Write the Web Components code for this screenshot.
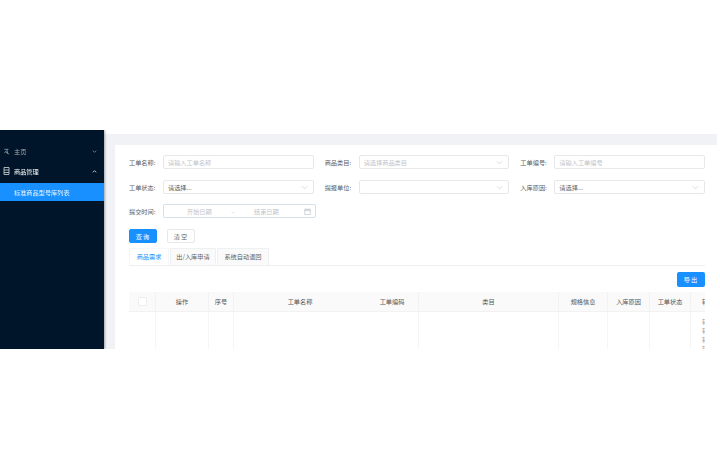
<!DOCTYPE html>
<html lang="zh">
<head>
<meta charset="utf-8">
<title>标准商品型号库列表</title>
<style>
  html, body { margin: 0; background: #fff; }
  body { font-family: "Noto Sans CJK SC", "Liberation Sans", sans-serif; font-size: 6.2px; color: #606266; }
</style>
</head>
<body>
<app-shell>
  <side-menu slot="side"></side-menu>
  <search-form></search-form>
  <order-tabs></order-tabs>
  <order-table></order-table>
</app-shell>

<script>
(function () {
  const CHEVRON = '<svg width="7" height="7" viewBox="0 0 8 8" fill="none" stroke="#c0c4cc" stroke-width=".7"><path d="M1 2.5 4 5.5 7 2.5"/></svg>';
  const CALENDAR = '<svg width="7" height="7" viewBox="0 0 8 8" fill="none" stroke="#b4b8c0" stroke-width=".7"><path d="M.8 1.5h6.4v6H.8zM.8 3h6.4M2.4 .5v1.5M5.6 .5v1.5"/></svg>';

  class AppShell extends HTMLElement {
    constructor() {
      super();
      this.attachShadow({ mode: 'open' }).innerHTML = `
        <style>
          :host { display: flex; width: 717px; height: 219px; margin-top: 130px; overflow: hidden; filter: blur(.35px); }
          main { flex: 1; min-width: 0; padding-top: 4px; box-sizing: border-box; }
          .band { height: 215px; background: #f0f2f5; padding: 11px 0 0 11px; box-sizing: border-box; }
          .card { height: 100%; background: #fff; padding: 10px 12px 0 14px; box-sizing: border-box; }
        </style>
        <slot name="side"></slot>
        <main><div class="band"><div class="card"><slot></slot></div></div></main>
      `;
    }
  }

  class SideMenu extends HTMLElement {
    constructor() {
      super();
      this.attachShadow({ mode: 'open' }).innerHTML = `
        <style>
          :host { display: block; width: 104px; flex: none; background: #001529; padding-top: 11px; box-sizing: border-box; box-shadow: 1px 0 2px rgba(0,21,41,.35); position: relative; color: #a6adb4; }
          .row { display: flex; align-items: center; height: 20px; padding: 0 7px 0 3px; }
          .row span { flex: 1; margin-left: 4px; }
          .row.open { color: #fff; }
          .row svg { flex: none; }
          .sub { height: 18px; line-height: 19px; margin-top: 2px; padding-left: 14px; background: #1890ff; color: #e8f4ff; white-space: nowrap; }
        </style>
        <div class="row">
          <svg width="7" height="7" viewBox="0 0 8 8" fill="none" stroke="#a6adb4" stroke-width=".8"><path d="M1.5 1.5h4.5L1.5 5.5M3 4.5l4 2.5M5 3.5v3"/></svg>
          <span>主页</span>
          <svg width="5" height="5" viewBox="0 0 6 6" fill="none" stroke="#a6adb4" stroke-width=".8"><path d="M1 2 3 4 5 2"/></svg>
        </div>
        <div class="row open">
          <svg width="7" height="8" viewBox="0 0 7 8" fill="none" stroke="#d5d8dc" stroke-width=".8"><path d="M1 .5h5v7H1zM1 3h5M1 5.5h5"/></svg>
          <span>商品管理</span>
          <svg width="5" height="5" viewBox="0 0 6 6" fill="none" stroke="#fff" stroke-width=".9"><path d="M1 4 3 2 5 4"/></svg>
        </div>
        <div class="sub">标准商品型号库列表</div>
      `;
    }
  }

  class FormField extends HTMLElement {
    constructor() {
      super();
      this.attachShadow({ mode: 'open' });
    }

    connectedCallback() {
      this.render();
    }

    render() {
      const kind = this.getAttribute('kind') || 'input';
      const text = this.getAttribute('text') || '';
      const filled = kind === 'value';
      const arrow = kind !== 'input';
      this.shadowRoot.innerHTML = `
        <style>
          :host { display: flex; align-items: center; height: 14px; }
          label { width: 34px; flex: none; color: #5a5e66; white-space: nowrap; }
          .box { flex: 1; min-width: 0; height: 14px; box-sizing: border-box; border: 1px solid #e6e8ec; border-radius: 2px; display: flex; align-items: center; justify-content: space-between; padding: 0 5px 0 4px; background: #fff; color: ${filled ? '#606266' : '#c0c4cc'}; white-space: nowrap; }
        </style>
        <label>${this.getAttribute('label')}</label>
        <div class="box"><span>${text}</span>${arrow ? CHEVRON : ''}</div>
      `;
    }
  }

  class DateRange extends HTMLElement {
    constructor() {
      super();
      this.attachShadow({ mode: 'open' }).innerHTML = `
        <style>
          :host { display: flex; align-items: center; height: 14px; width: 187px; }
          label { width: 34px; flex: none; color: #5a5e66; }
          .box { flex: 1; height: 14px; box-sizing: border-box; border: 1px solid #d6dfe9; border-radius: 2px; display: grid; grid-template-columns: 23px 25px 42px 25px 1fr; align-items: center; color: #c0c4cc; }
          .sep { text-align: center; }
          .end { padding-right: 4px; display: flex; justify-content: flex-end; }
        </style>
        <label>提交时间:</label>
        <div class="box"><span></span><span>开始日期</span><span class="sep">–</span><span>结束日期</span><span class="end">${CALENDAR}</span></div>
      `;
    }
  }

  class SearchForm extends HTMLElement {
    constructor() {
      super();
      this.attachShadow({ mode: 'open' }).innerHTML = `
        <style>
          :host { display: block; }
          .grid { display: grid; grid-template-columns: repeat(3, 1fr); column-gap: 11px; row-gap: 11px; width: 576px; }
          .grid form-field { min-width: 0; }
          .date { margin-top: 10px; }
          .btns { display: flex; gap: 10px; margin-top: 11px; }
          button { font: inherit; width: 28px; height: 14px; padding: 0; border-radius: 2px; box-sizing: border-box; border: 1px solid #e6e8ec; background: #fff; color: #606266; letter-spacing: 1px; }
          button.primary { background: #1890ff; border-color: #1890ff; color: #fff; }
        </style>
        <div class="grid">
          <form-field label="工单名称:" text="请输入工单名称"></form-field>
          <form-field label="商品类目:" text="请选择商品类目" kind="select"></form-field>
          <form-field label="工单编号:" text="请输入工单编号"></form-field>
          <form-field label="工单状态:" text="请选择..." kind="value"></form-field>
          <form-field label="提报单位:" kind="select"></form-field>
          <form-field label="入库原因:" text="请选择..." kind="value"></form-field>
        </div>
        <date-range class="date"></date-range>
        <div class="btns"><button class="primary">查询</button><button>清空</button></div>
      `;
    }
  }

  class OrderTabs extends HTMLElement {
    constructor() {
      super();
      this.attachShadow({ mode: 'open' }).innerHTML = `
        <style>
          :host { display: flex; gap: 1px; height: 18px; margin-top: 5px; border-bottom: 1px solid #eceef1; box-sizing: border-box; }
          div { height: 17px; line-height: 16px; text-align: center; box-sizing: border-box; border: 1px solid #eef0f2; border-bottom: 0; background: #fafafa; color: #606266; white-space: nowrap; }
          .on { width: 40px; background: #fff; color: #1890ff; border-color: #f6f7f8; }
        </style>
        <div class="on">商品需求</div>
        <div style="width:46px">出/入库申请</div>
        <div style="width:52px">系统自动退回</div>
      `;
    }
  }

  class OrderTable extends HTMLElement {
    constructor() {
      super();
      const cols = [
        ['', 27], ['操作', 53], ['序号', 25], ['工单名称', 132], ['工单编码', 53],
        ['类目', 140], ['规格信息', 49], ['入库原因', 42], ['工单状态', 41], ['转', 14],
      ];
      const tpl = cols.map((c) => `${c[1]}px`).join(' ');
      const head = cols.map((c, i) => {
        const cls = `h${i === 3 ? ' nb' : ''}${i === 9 ? ' last' : ''}`;
        return `<div class="${cls}">${i === 0 ? '<i></i>' : c[0]}</div>`;
      }).join('');
      const body = cols.map((c, i) => `<div class="c${i === 3 ? ' nb' : ''}">${i === 9 ? '<b>转<br>转<br>转<br>转</b>' : ''}</div>`).join('');
      this.attachShadow({ mode: 'open' }).innerHTML = `
        <style>
          :host { display: block; }
          .bar { display: flex; justify-content: flex-end; margin-top: 6px; }
          button { font: inherit; width: 28px; height: 15px; padding: 0; border: 0; border-radius: 2px; background: #1890ff; color: #fff; letter-spacing: 1px; }
          .t { display: grid; grid-template-columns: ${tpl}; grid-template-rows: 20px 38px; margin-top: 5px; width: 576px; overflow: hidden; }
          .h { display: flex; align-items: center; justify-content: center; background: #fafafa; border-right: 1px solid #f2f2f2; border-bottom: 1px solid #f2f2f2; box-sizing: border-box; color: #555; white-space: nowrap; overflow: hidden; }
          .c { border-right: 1px solid #f5f5f5; box-sizing: border-box; overflow: hidden; }
          .nb { border-right: 0; }
          .h.last { justify-content: flex-start; padding-left: 11px; border-right: 0; }
          .c:last-child { border-right: 0; }
          i { width: 7px; height: 7px; border: 1px solid #eee; border-radius: 1px; background: #fff; }
          b { display: block; font-weight: 400; line-height: 9px; color: #999; white-space: nowrap; padding: 5px 0 0 11px; }
        </style>
        <div class="bar"><button>导出</button></div>
        <div class="t">${head}${body}</div>
      `;
    }
  }

  customElements.define('app-shell', AppShell);
  customElements.define('side-menu', SideMenu);
  customElements.define('form-field', FormField);
  customElements.define('date-range', DateRange);
  customElements.define('search-form', SearchForm);
  customElements.define('order-tabs', OrderTabs);
  customElements.define('order-table', OrderTable);
}());
</script>
</body>
</html>
